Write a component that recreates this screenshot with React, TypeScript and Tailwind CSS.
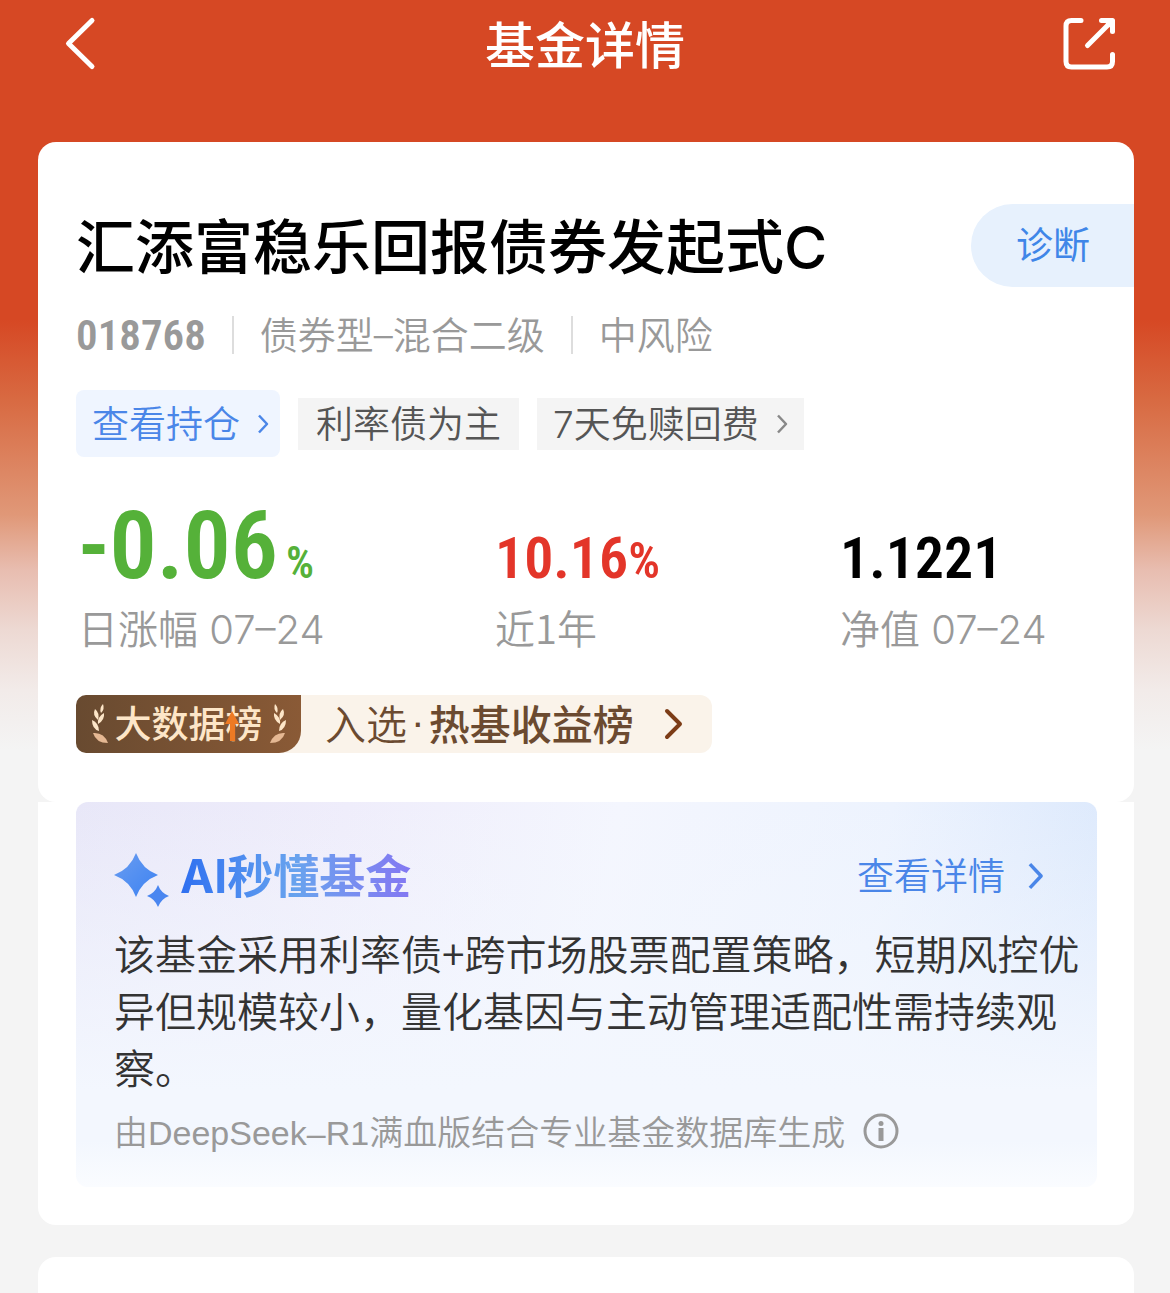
import type { ReactNode } from "react";

export default function App() {
  return (
    <div className="flex min-h-screen flex-col bg-[#f4f4f4] bg-[linear-gradient(180deg,#d64824_0px,#d64824_320px,#d86a42_400px,#e09878_515px,#e8bdb0_570px,#edd9d3_630px,#f2ebe9_690px,#f4f4f4_750px)] font-['Noto_Sans_CJK_SC',sans-serif] text-black">
      <Header />

      <main className="flex flex-1 flex-col pl-[38px] pr-9">
        <FundSummary />
        <AiDigest />
        <section className="mt-8 min-h-9 flex-1 rounded-t-[18px] bg-white" />
      </main>
    </div>
  );
}

function Header() {
  return (
    <header className="mb-[54px] flex h-[88px] items-center justify-between px-[49px]">
      <button type="button" aria-label="返回" className="cursor-pointer">
        <svg viewBox="0 0 60 60" className="block size-[60px]" fill="none" aria-hidden="true">
          <path d="M43 6.500L19.500 29.500L43 52.500" stroke="#fff" strokeWidth="5" strokeLinecap="round" strokeLinejoin="round" />
        </svg>
      </button>
      <h1 className="pb-1 text-[50px] font-medium leading-[60px] text-white">基金详情</h1>
      <button type="button" aria-label="分享" className="cursor-pointer">
        <svg viewBox="0 0 60 60" className="block size-[60px]" fill="none" aria-hidden="true">
          <path
            d="M20 6.500H10.500Q5 6.500 5 12V47.500Q5 53 10.500 53H46Q51.500 53 51.500 47.500V40.500M40.500 6.500H51.500V17.500M49 9L26.500 31.500"
            stroke="#fff"
            strokeWidth="5"
            strokeLinecap="round"
            strokeLinejoin="round"
          />
          <path d="M42 6.500H51.500V16Z" fill="#fff" />
        </svg>
      </button>
    </header>
  );
}

function FundSummary() {
  return (
    <section className="rounded-[18px] bg-white pb-[49px] pl-[38px] pt-[62px]">
      <div className="flex items-center justify-between">
        <h2 className="pb-1 text-[59px] font-medium leading-[79px]">
          汇添富稳乐回报债券发起式<Latin>C</Latin>
        </h2>
        <button
          type="button"
          className="h-[83px] cursor-pointer rounded-l-full bg-[#e7f1fd] pb-1 pl-[45px] pr-11 text-[37px] leading-[79px] text-[#3f86e8]"
        >
          诊断
        </button>
      </div>

      {/* Code, type and risk level */}
      <div className="mt-[25px] flex h-[46px] items-center text-[38px] font-[350] leading-[42px] text-[#999]">
        <Digits className="text-[43px]">018768</Digits>
        <span className="mx-[26px] h-[38px] w-[2px] bg-[#ddd]" />
        <span className="pb-1">
          债券型<Latin>–</Latin>混合二级
        </span>
        <span className="mx-[26px] h-[38px] w-[2px] bg-[#ddd]" />
        <span className="pb-1">中风险</span>
      </div>

      <div className="mt-8 flex items-center gap-[18px] text-[37px] font-[350] leading-[48px]">
        <a href="#holdings" className="flex h-[67px] items-center gap-[17px] rounded-lg bg-[#eff5ff] pl-4 pr-[11px] text-[#4a86e8]">
          <span className="pb-1">查看持仓</span>
          <Chevron className="h-5 w-3" />
        </a>
        <span className="h-[52px] bg-[#f4f4f4] px-[18px] pb-1 text-[#555]">利率债为主</span>
        <span className="flex h-[52px] items-center gap-[17px] bg-[#f4f4f4] px-4 text-[#555]">
          <span className="pb-1">
            <Latin>7</Latin>天免赎回费
          </span>
          <Chevron className="h-5 w-3 text-[#888]" />
        </span>
      </div>

      {/* Key figures */}
      <div className="mt-10 grid grid-cols-[417fr_345fr_296fr]">
        <Stat label="日涨幅" date="07–24" className="text-[#55b139]">
          <Digits>-0.06</Digits>
          <Digits className="ml-2 text-[44px]">%</Digits>
        </Stat>
        <Stat label="近1年" className="text-[#e33529]">
          <Digits className="text-[58px]">10.16</Digits>
          <Digits className="text-[50px] font-medium">%</Digits>
        </Stat>
        <Stat label="净值" date="07–24" className="text-black">
          <Digits className="text-[58px]">1.1221</Digits>
        </Stat>
      </div>

      <a href="#ranking" className="mt-[43px] inline-flex h-[58px] items-center rounded-xl bg-[#faf3ea] pr-[26px] text-[41px] leading-[54px] text-[#6b4a30]">
        <RankBadge />
        <span className="ml-6 pb-1 font-[350]">入选</span>
        <span className="mx-1 pb-1 font-['Liberation_Sans']">·</span>
        <span className="pb-1 font-medium">热基收益榜</span>
        <svg viewBox="0 0 20 32" className="ml-[30px] mr-[2px] h-8 w-5" fill="none" aria-hidden="true">
          <path d="M3 3L16 16L3 29" stroke="#7c3c17" strokeWidth="4" strokeLinecap="round" strokeLinejoin="round" />
        </svg>
      </a>
    </section>
  );
}

function Stat({
  label,
  date,
  className,
  children,
}: {
  label: string;
  date?: string;
  className: string;
  children: ReactNode;
}) {
  return (
    <div className="pl-[2px]">
      <p className={`h-[106px] font-['Roboto_Condensed','Roboto',sans-serif] text-[94px] leading-[98px] ${className}`}>
        {children}
      </p>
      <p className="text-[40px] font-[350] leading-[49px] text-[#999]">
        {label}
        {date && <Latin> {date}</Latin>}
      </p>
    </div>
  );
}

function Digits({ className = "", children }: { className?: string; children: ReactNode }) {
  return (
    <span className={`font-['Roboto_Condensed','Roboto',sans-serif] font-semibold leading-none ${className}`}>
      {children}
    </span>
  );
}

function Latin({ children }: { children: ReactNode }) {
  return <span className="font-['Inter',sans-serif] leading-none">{children}</span>;
}

function RankBadge() {
  return (
    <span className="flex h-[58px] w-[225px] items-center justify-center gap-[6px] rounded-l-[10px] rounded-br-[22px] bg-linear-to-r from-[#684a30] to-[#8a5a36] text-[37px] font-medium text-[#fde6c8]">
      <Laurel />
      <span className="relative pb-1">
        大数据榜
        <svg viewBox="0 0 14 30" className="absolute bottom-3 right-6 h-[30px] w-[14px]" aria-hidden="true">
          <path d="M7 0L14 13H10V30H5V13H0Z" fill="#ed7a24" />
        </svg>
      </span>
      <Laurel className="-scale-x-100" />
    </span>
  );
}

function Laurel({ className = "" }: { className?: string }) {
  return (
    <svg viewBox="0 0 18 40" className={`h-10 w-[18px] ${className}`} fill="#fde6c8" aria-hidden="true">
      <path d="M12 0Q14 5 10 9Q8 4 12 0Z" />
      <path d="M4 5Q9 9 7 16Q1 11 4 5Z" />
      <path d="M13 9Q14 16 7 20Q6 13 13 9Z" />
      <path d="M1 16Q8 19 8 27Q1 25 1 16Z" />
      <path d="M2 29Q13 28 17 39Q5 39 2 29Z" fill="#e5b893" />
    </svg>
  );
}

function AiDigest() {
  return (
    <section className="rounded-b-[18px] bg-white pb-[38px] pl-[38px] pr-[37px]">
      <div className="rounded-xl bg-[linear-gradient(180deg,#f3f7fe00_0%,#f3f7fe_75%,#f3f7fe_88%,#fafcff_100%),linear-gradient(100deg,#e8e7f8_0%,#efedfb_25%,#f4f6fe_50%,#edf3fe_75%,#d9e7fc_100%)] pb-8 pl-[38px] pr-2 pt-11">
        <div className="flex h-[60px] items-center justify-between pr-[45px]">
          <h3 className="flex items-center gap-[10px] text-[46px] font-bold">
            <SparkleIcon />
            <span className="bg-linear-to-r from-[#2f6ff0] via-[#68a3ee] to-[#8377f2] bg-clip-text pb-[6px] leading-[54px] text-transparent">
              <Latin>AI</Latin>秒懂基金
            </span>
          </h3>
          <a href="#detail" className="flex items-center gap-[22px] text-[37px] font-[350] leading-[56px] text-[#4a86e8]">
            <span className="pb-1">查看详情</span>
            <Chevron className="h-7 w-[17px]" />
          </a>
        </div>
        <p className="mt-[18px] text-[41px] font-[350] leading-[57px] text-[#333]">
          该基金采用利率债+跨市场股票配置策略，短期风控优异但规模较小，量化基因与主动管理适配性需持续观察。
        </p>
        <p className="mt-3 flex items-center gap-[18px] text-[34px] font-[350] leading-[48px] text-[#999]">
          <span>
            由<span className="font-['Liberation_Sans'] leading-none">DeepSeek–R1</span>满血版结合专业基金数据库生成
          </span>
          <button type="button" aria-label="说明" className="cursor-pointer">
            <svg viewBox="0 0 36 36" className="block size-9" fill="none" aria-hidden="true">
              <circle cx="18" cy="18" r="16" stroke="#999" strokeWidth="3" />
              <rect x="15.500" y="15" width="5" height="13" fill="#999" />
              <circle cx="18" cy="10.500" r="2.500" fill="#999" />
            </svg>
          </button>
        </p>
      </div>
    </section>
  );
}

function SparkleIcon() {
  return (
    <svg viewBox="0 0 56 56" className="mt-2 size-[56px]" aria-hidden="true">
      <defs>
        <linearGradient id="sparkle" x1="0" y1="0" x2="1" y2="1">
          <stop offset="0" stopColor="#6a9df0" />
          <stop offset="1" stopColor="#3d82f2" />
        </linearGradient>
      </defs>
      <path d="M22 1Q28 17 44 23Q28 29 22 45Q16 29 0 23Q16 17 22 1Z" fill="url(#sparkle)" />
      <path d="M44 33Q47 41 55 44Q47 47 44 55Q41 47 33 44Q41 41 44 33Z" fill="#4a86f0" />
    </svg>
  );
}

function Chevron({ className = "" }: { className?: string }) {
  return (
    <svg viewBox="0 0 12 20" className={`block ${className}`} fill="none" aria-hidden="true">
      <path d="M2 1.500L10 10L2 18.500" stroke="currentColor" strokeWidth="2.500" strokeLinejoin="round" />
    </svg>
  );
}
